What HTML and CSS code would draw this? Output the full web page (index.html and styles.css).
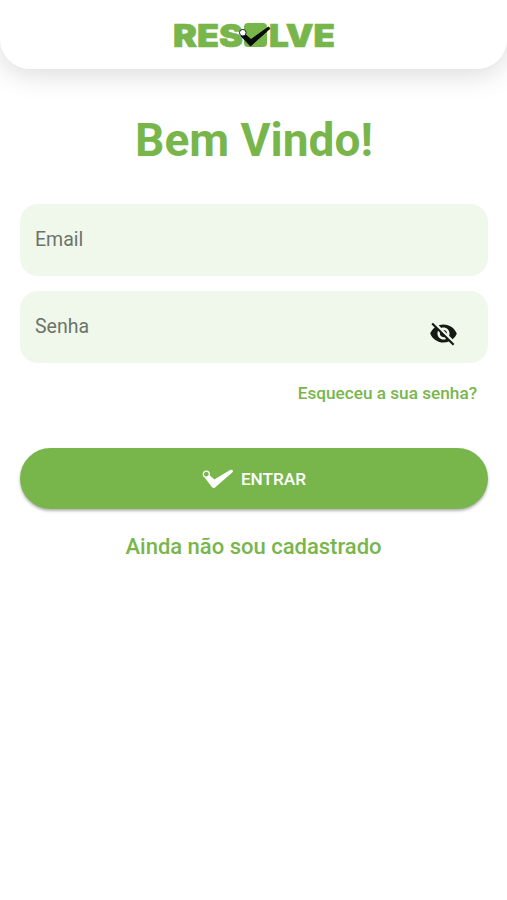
FILE: index.html
```html
<!DOCTYPE html>
<html lang="pt-BR">
<head>
    <meta charset="UTF-8">
    <meta name="viewport" content="width=device-width, initial-scale=1.0">
    <title>Resolve</title>
    <link rel="stylesheet" href="styles.css">
</head>
<body>
<header class="header">
    <svg class="logo" width="162" height="26" viewBox="0 0 162 26">
        <g class="logo-text">
            <text x="0" y="24.5" textLength="70" lengthAdjust="spacingAndGlyphs">RES</text>
            <text x="96" y="24.5" textLength="66" lengthAdjust="spacingAndGlyphs">LVE</text>
        </g>
        <rect x="71" y="1" width="23" height="24" rx="4"/>
        <path class="logo-check" d="M68 14 L73 13 L78 17.5 L95.5 5 L97 6.5 L77.5 24 Z"/>
        <circle class="logo-dot" cx="69.8" cy="10.7" r="3.3"/>
    </svg>
</header>

<main class="content">
    <h1>Bem Vindo!</h1>

    <form class="login-form">
        <div class="field">
            <input type="email" placeholder="Email">
        </div>
        <div class="field">
            <input type="password" placeholder="Senha">
            <svg class="eye-icon" viewBox="0 0 24 24">
                <path d="M12 7c2.76 0 5 2.24 5 5 0 .65-.13 1.26-.36 1.83l2.92 2.92c1.51-1.26 2.7-2.89 3.43-4.75-1.73-4.39-6-7.5-11-7.5-1.4 0-2.74.25-3.98.7l2.16 2.16C10.74 7.13 11.35 7 12 7zM2 4.27l2.28 2.28.46.46C3.08 8.3 1.78 10.02 1 12c1.73 4.39 6 7.5 11 7.5 1.55 0 3.03-.3 4.38-.84l.42.42L19.73 22 21 20.73 3.27 3 2 4.27zM7.53 9.8l1.55 1.55c-.05.21-.08.43-.08.65 0 1.66 1.34 3 3 3 .22 0 .44-.03.65-.08l1.55 1.55c-.67.33-1.41.53-2.2.53-2.76 0-5-2.24-5-5 0-.79.2-1.53.53-2.2zm4.31-.78l3.15 3.15.02-.16c0-1.66-1.34-3-3-3l-.17.01z"/>
            </svg>
        </div>
        <a class="forgot" href="#">Esqueceu a sua senha?</a>
        <button class="btn" type="button">
            <svg class="btn-check" width="32" height="20" viewBox="0 0 32 20">
                <path d="M1.5 7 L8 6.5 L12.3 10.5 L28.5 .8 Q31.5 .3 30.8 3 L13 18.5 Q11.5 19.7 10 18.2 Z"/>
                <circle cx="4.3" cy="5.2" r="3"/>
            </svg>
            <span>ENTRAR</span>
        </button>
    </form>

    <a class="register" href="#">Ainda não sou cadastrado</a>
</main>
</body>
</html>
```

FILE: styles.css
```css
* {
    box-sizing: border-box;
}

body {
    margin: 0;
    background-color: #fff;
    font-family: Roboto, sans-serif;
    color: #78b64c;
}

a {
    color: #78b64c;
    text-decoration: none;
    font-weight: 500;
}

.header {
    display: flex;
    justify-content: center;
    height: 69px;
    padding-top: 22px;
    background-color: #fff;
    border-radius: 0 0 30px 30px;
    box-shadow: 0 5px 28px rgba(0, 0, 0, 0.15);
}

.logo {
    fill: #78b64c;
    overflow: visible;
}

.logo-text {
    font-family: Inter, sans-serif;
    font-size: 31.5px;
    font-weight: 900;
    stroke: #78b64c;
    stroke-width: 0.7;
}

.logo-check {
    fill: #0b0b0b;
    stroke: #0b0b0b;
    stroke-width: 1;
    stroke-linejoin: round;
}

.logo-dot {
    fill: #fff;
    stroke: #222;
    stroke-width: 1;
}

.content {
    display: flex;
    flex-direction: column;
    align-items: center;
    padding: 0 19px 0 20px;
}

h1 {
    margin: 44px 0 36px;
    font-size: 46px;
    line-height: 55px;
    font-weight: 700;
}

.login-form {
    display: flex;
    flex-direction: column;
    width: 100%;
}

.field {
    display: flex;
    align-items: center;
    height: 72px;
    margin-bottom: 15px;
    padding: 0 30px 0 15px;
    background-color: #f0f8ec;
    border-radius: 18px;
}

.field input {
    flex: 1;
    min-width: 0;
    height: 100%;
    padding: 0 0 2px;
    border: none;
    outline: none;
    background: none;
    font-family: inherit;
    font-size: 19.5px;
}

.field input::placeholder {
    color: #6c746a;
}

.eye-icon {
    width: 29px;
    height: 29px;
    margin-top: 12px;
    fill: #151a14;
}

.forgot {
    align-self: flex-end;
    margin: 4px 11px 0 0;
    font-size: 17.2px;
    line-height: 22px;
}

.btn {
    display: flex;
    align-items: center;
    justify-content: center;
    gap: 7px;
    height: 61px;
    margin-top: 44px;
    padding: 0;
    border: none;
    border-radius: 31px;
    background-color: #78b64c;
    box-shadow: 0 2px 3px rgba(0, 0, 0, 0.3);
    color: #fff;
    font-family: inherit;
    font-size: 17.2px;
    font-weight: 500;
    cursor: pointer;
}

.btn-check path {
    fill: #fff;
}

.btn-check circle {
    fill: #78b64c;
    stroke: #fff;
    stroke-width: 1.3;
}

.register {
    margin-top: 24px;
    margin-right: 1px;
    font-size: 22px;
    line-height: 28px;
}
```
